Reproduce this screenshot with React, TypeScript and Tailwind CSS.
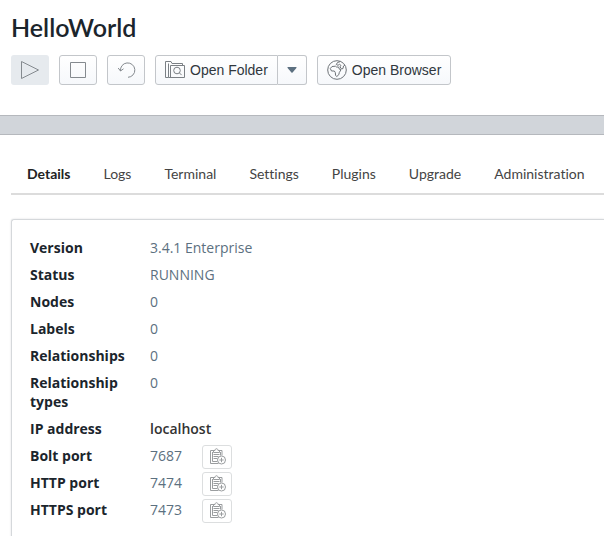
import type { ReactNode } from "react";

const toolButton =
  "flex h-[30px] items-center justify-center rounded-[3px] border border-[#c3c6ca] bg-linear-to-b from-white to-[#f6f8fb]";

const tabs = ["Details", "Logs", "Terminal", "Settings", "Plugins", "Upgrade", "Administration"];

type Row = { label: string; value: string; dark?: boolean; copy?: boolean };

const rows: Row[] = [
  { label: "Version", value: "3.4.1 Enterprise" },
  { label: "Status", value: "RUNNING" },
  { label: "Nodes", value: "0" },
  { label: "Labels", value: "0" },
  { label: "Relationships", value: "0" },
  { label: "Relationship types", value: "0" },
  { label: "IP address", value: "localhost", dark: true },
  { label: "Bolt port", value: "7687", copy: true },
  { label: "HTTP port", value: "7474", copy: true },
  { label: "HTTPS port", value: "7473", copy: true },
];

function Icon({ size = 20, children }: { size?: number; children: ReactNode }) {
  return (
    <svg
      width={size}
      height={size}
      viewBox={`0 0 ${size} ${size}`}
      fill="none"
      stroke="currentColor"
      strokeWidth="1"
      aria-hidden="true"
      className="shrink-0"
    >
      {children}
    </svg>
  );
}

function PlayIcon() {
  return (
    <Icon>
      <path d="M1.5 1.5v17l17-8.5z" />
    </Icon>
  );
}

function StopIcon() {
  return (
    <Icon>
      <path d="M2.5 2.5h15v15h-15z" />
    </Icon>
  );
}

function RestartIcon() {
  return (
    <Icon>
      <path d="M4.500 11A7.200 7.200 0 1 1 12 17.300" />
      <path d="M2.200 8l2.300 3L7.500 8.800" />
    </Icon>
  );
}

function FolderIcon() {
  return (
    <Icon>
      <path d="M3.500 17.500h-3V1.500h5.500l1 2h10.500v2" />
      <path d="M3.500 17.500v-14M5.500 17.500v-12h14v12h-16" />
      <circle cx="12" cy="10.500" r="3.300" />
      <path d="M14.400 12.900l2.200 2.200" />
    </Icon>
  );
}

function GlobeIcon() {
  return (
    <Icon>
      <circle cx="10" cy="10" r="9.300" />
      <path d="M3.300 8.500L5 6.500l3.500-.3 1 .8h2l1 2.300 1.500.5-1.700 2.700-.5 2.200-2 1.800-1.200-1-.3-3-1-1.500H4.500z" />
      <path d="M13.500 1.500l-3 1L9.300 4.500l1.700.8 1.500-1 1.500 1.200-1 1.300 1.500 2.200 1.500-.5.500-2.500 1.500-1" />
    </Icon>
  );
}

function CopyIcon() {
  return (
    <Icon size={18}>
      <path d="M10.500 15.500h-8v-13h3.500M10.500 2.500h3.500v5" />
      <path d="M5.500 4.500h6v-2h-1.500c0-2.400-3-2.400-3 0H5.500z" />
      <path d="M4.500 4v9.500h5M12.500 4v3.500M5.500 6.500h6M5.500 8.500h5M5.500 10.500h4" />
      <circle cx="13.500" cy="12" r="4" fill="white" />
      <path d="M13.500 9.800v4.400M11.300 12h4.400" />
    </Icon>
  );
}

export default function App() {
  return (
    <div className="min-h-screen overflow-hidden bg-white font-['Open_Sans',sans-serif] text-[#1b252c]">
      <header className="px-[11px] pb-[30px] pt-[11px]">
        <h1 className="font-['Lato',sans-serif] text-[25px] font-semibold leading-8">HelloWorld</h1>
        <div className="mt-3 flex gap-[10px] font-['Liberation_Sans',sans-serif] text-sm text-[#30373d]">
          <button
            type="button"
            aria-label="Start"
            className="flex h-[30px] w-[38px] items-center justify-center rounded-[3px] bg-[#e6eaee] text-[#858a8f]"
          >
            <PlayIcon />
          </button>
          <button type="button" aria-label="Stop" className={`${toolButton} w-[38px] text-[#858a8f]`}>
            <StopIcon />
          </button>
          <button type="button" aria-label="Restart" className={`${toolButton} w-[38px] text-[#858a8f]`}>
            <RestartIcon />
          </button>
          <div className="flex">
            <button type="button" className={`${toolButton} gap-[5px] rounded-r-none px-[9px]`}>
              <span className="text-[#7b8085]">
                <FolderIcon />
              </span>
              Open Folder
            </button>
            <button
              type="button"
              aria-label="More folders"
              className={`${toolButton} w-[29px] rounded-l-none border-l-0 text-[#5c7080]`}
            >
              <svg width="10" height="6" viewBox="0 0 10 6" fill="currentColor" aria-hidden="true">
                <path d="M1 0h8q1 0 .4.900L5.600 5.500q-.6.500-1.200 0L.6.900Q0 0 1 0z" />
              </svg>
            </button>
          </div>
          <button type="button" className={`${toolButton} gap-[5px] px-[9px]`}>
            <span className="text-[#6d7277]">
              <GlobeIcon />
            </span>
            Open Browser
          </button>
        </div>
      </header>

      <div className="h-5 border-y border-[#b5b8bd] bg-[#d1d5da]" />

      <main className="pl-[11px]">
        <nav
          role="tablist"
          className="mt-5 flex gap-px border-b-2 border-[#dcdcdc] font-['Lato',sans-serif] text-sm text-[#444444] [font-variant-ligatures:none]"
        >
          {tabs.map((tab, i) => (
            <button
              key={tab}
              type="button"
              role="tab"
              aria-selected={i === 0}
              className={`h-[38px] px-4 ${i === 0 ? "font-bold text-[#222222]" : ""}`}
            >
              {tab}
            </button>
          ))}
        </nav>

        <section className="mt-6 rounded-tl-[3px] border-l border-t border-[#d5d8db] pb-5 pl-[18px] pt-[14px] shadow-[0_0_2px_rgba(16,22,26,0.15)]">
          <table className="text-sm">
            <tbody>
              {rows.map((row) => (
                <tr key={row.label} className="align-top">
                  <th scope="row" className="w-[120px] py-1 pr-4 text-left font-bold leading-[19px]">
                    {row.label}
                  </th>
                  <td className={row.dark ? "font-semibold text-[#333333]" : "text-[#5c7080]"}>
                    <div className="flex h-[27px] items-end">
                      <span className="min-w-[52px] leading-[27px]">{row.value}</span>
                      {row.copy && (
                        <button
                          type="button"
                          aria-label={`Copy ${row.label}`}
                          className="flex h-6 w-[30px] items-center justify-center rounded-[3px] border border-[#dcdedf] text-[#9a9d9f]"
                        >
                          <CopyIcon />
                        </button>
                      )}
                    </div>
                  </td>
                </tr>
              ))}
            </tbody>
          </table>
        </section>
      </main>
    </div>
  );
}
